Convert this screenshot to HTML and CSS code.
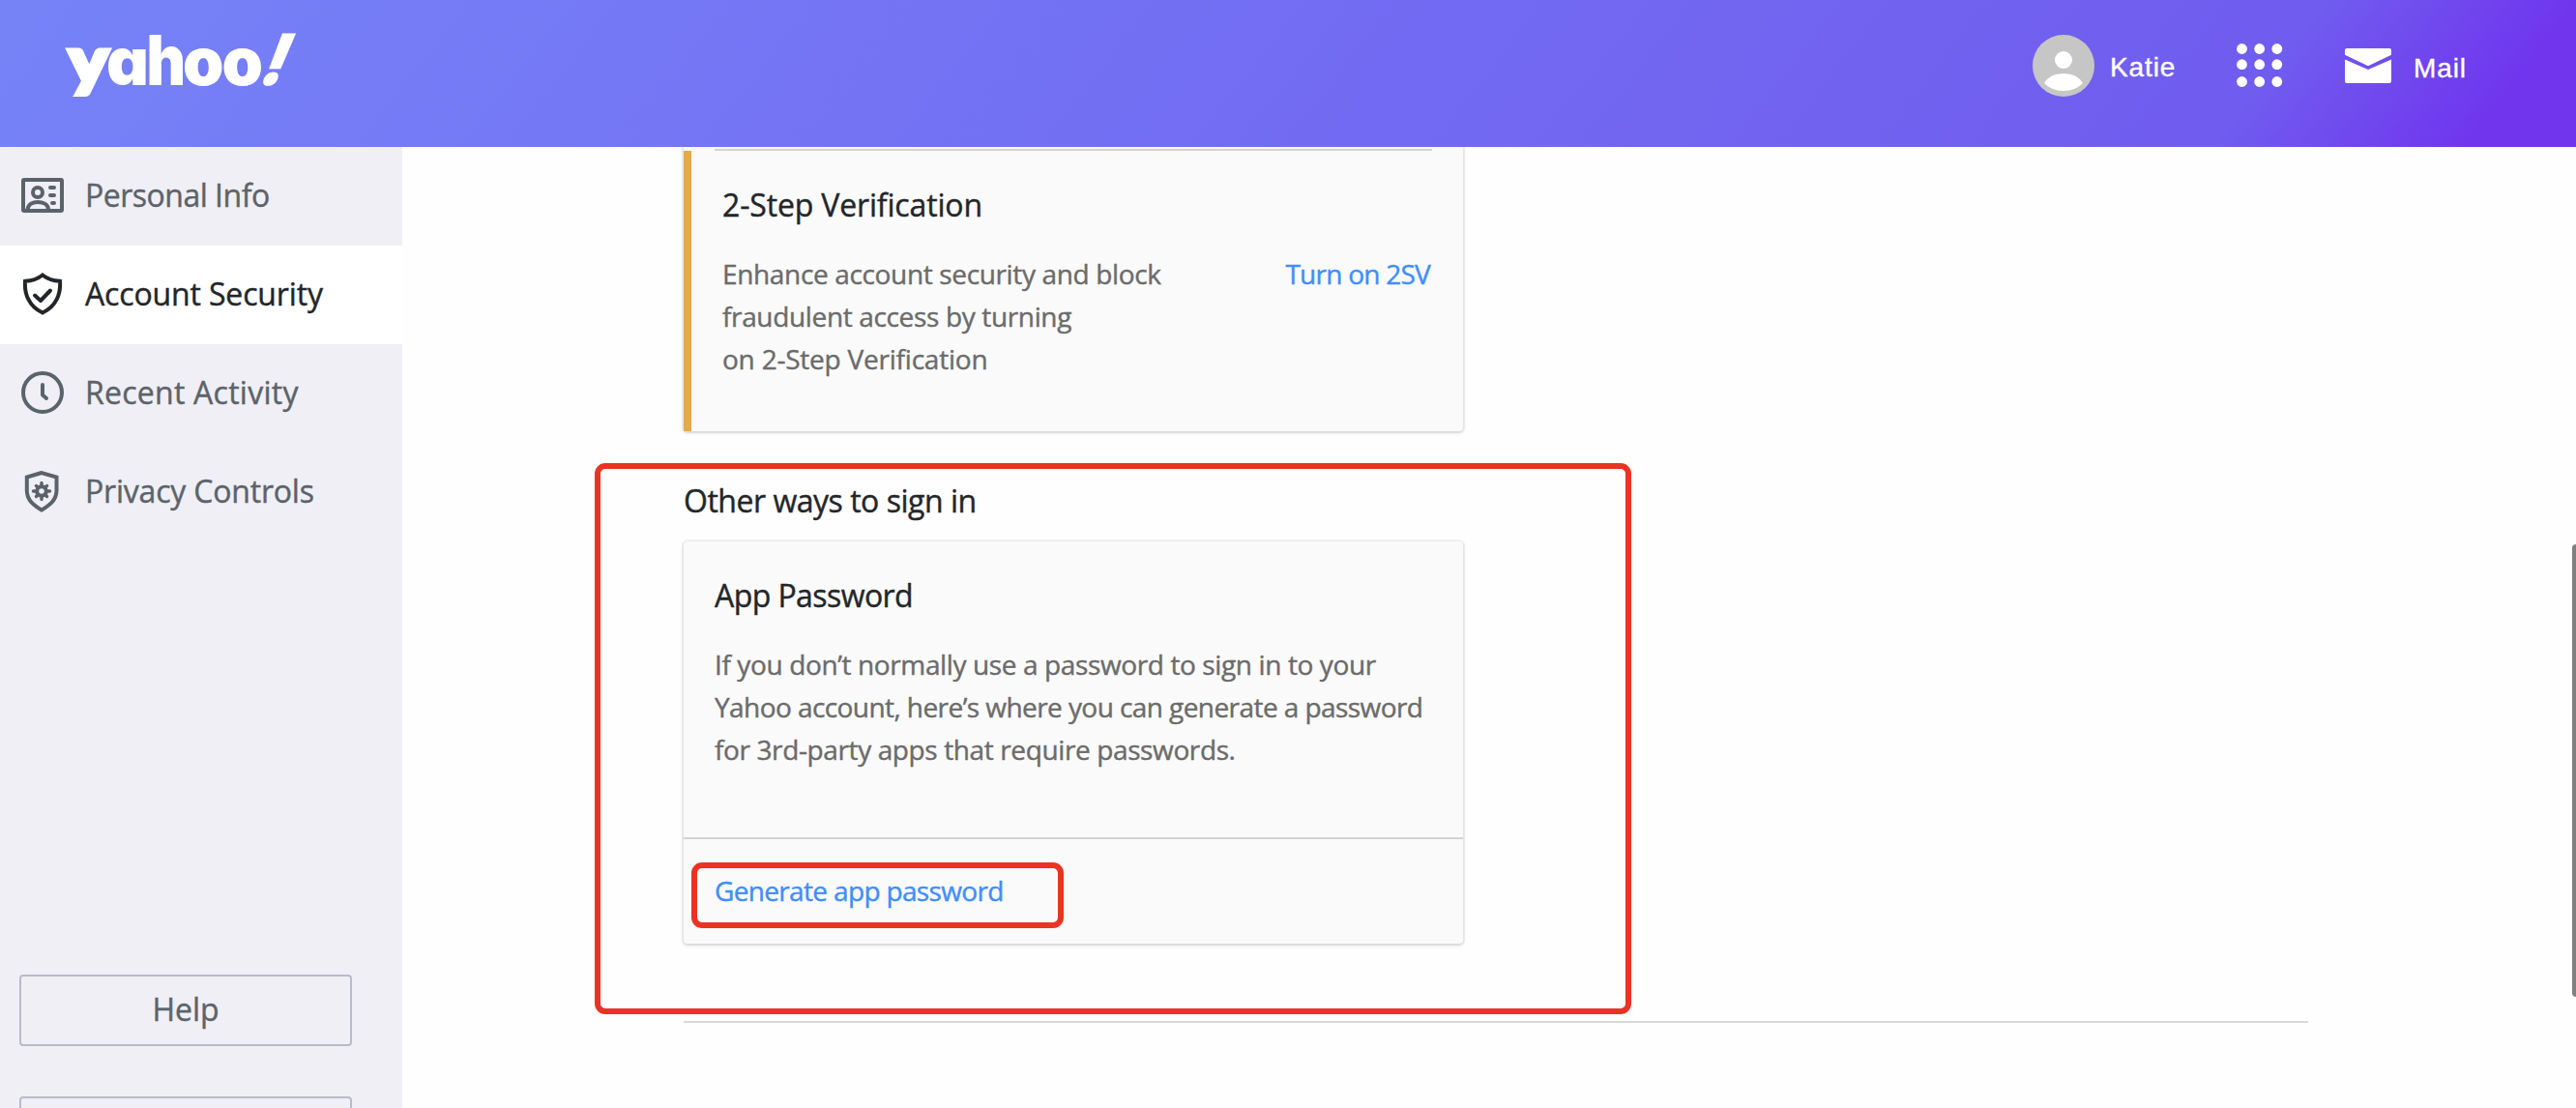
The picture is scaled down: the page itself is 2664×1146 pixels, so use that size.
FILE: index.html
```html
<!DOCTYPE html>
<html lang="en">
<head>
    <meta charset="UTF-8">
    <meta name="viewport" content="width=device-width, initial-scale=1.0">
    <title>Account Security</title>
    <link rel="stylesheet" href="styles.css">
</head>
<body>
    <header class="header">
        <svg class="logo" width="244" height="100" viewBox="66 18 244 100">
            <text class="logo-y" transform="translate(71.5 86) scale(1.14 1)">y</text>
            <text x="110" y="88">a</text>
            <text transform="translate(151.5 88) scale(.92 1.06)">h</text>
            <text x="189" y="88">o</text>
            <text x="229.5" y="88">o</text>
            <text transform="translate(264.5 88) skewX(-22) scale(1 1.08)">!</text>
        </svg>
        <div class="user">
            <svg class="avatar" width="64" height="64" viewBox="0 0 64 64">
                <circle cx="32" cy="32" r="32" fill="#c6c6c6"/>
                <circle cx="32" cy="26" r="9" fill="#fff"/>
                <path d="M12 50Q18 40 32 40T52 50Q44 58 32 58T12 50Z" fill="#fff"/>
            </svg>
            <span>Katie</span>
        </div>
        <svg class="apps" width="48" height="46" viewBox="0 0 48 46" fill="#fff">
            <circle cx="5.5" cy="5.5" r="5.4"/><circle cx="23.7" cy="5.5" r="5.4"/><circle cx="41.8" cy="5.5" r="5.4"/>
            <circle cx="5.5" cy="21.7" r="5.4"/><circle cx="23.7" cy="21.7" r="5.4"/><circle cx="41.8" cy="21.7" r="5.4"/>
            <circle cx="5.5" cy="39.5" r="5.4"/><circle cx="23.7" cy="39.5" r="5.4"/><circle cx="41.8" cy="39.5" r="5.4"/>
        </svg>
        <div class="mail">
            <svg width="48" height="36" viewBox="0 0 48 36" fill="#fff">
                <path d="M2 0H46Q48 0 48 2V6.8L24 18.3L0 6.8V2Q0 0 2 0Z"/>
                <path d="M0 11.5L24 22L48 11.5V34Q48 36 46 36H2Q0 36 0 34Z"/>
            </svg>
            <span>Mail</span>
        </div>
    </header>

    <div class="page">
        <aside class="sidebar">
            <nav>
                <a class="nav-item nav-info">
                    <svg width="44" height="44" viewBox="0 0 44 44">
                        <rect x="2" y="6" width="40" height="32" rx="1"/>
                        <circle cx="17" cy="19" r="5"/>
                        <path d="M6.500 37C7 31 12 29 17 29S28 31 28 37"/>
                        <path class="round" d="M30 14h4M30 22h4M32 30h2"/>
                    </svg>
                    <span>Personal Info</span>
                </a>
                <a class="nav-item nav-security active">
                    <svg width="44" height="44" viewBox="0 0 44 44">
                        <path d="M22 2.500C17 6.500 11 8.500 4 8.800C3 22 8 35 22 41.500C36 35 41 22 40 8.800C33 8.500 27 6.500 22 2.500Z"/>
                        <path class="round" d="M14 23.500L20 29L30 18.500"/>
                    </svg>
                    <span>Account Security</span>
                </a>
                <a class="nav-item nav-activity">
                    <svg width="44" height="44" viewBox="0 0 44 44">
                        <circle cx="22" cy="22" r="20"/>
                        <path class="round" d="M22 14V24.500L26 28"/>
                    </svg>
                    <span>Recent Activity</span>
                </a>
                <a class="nav-item nav-privacy">
                    <svg width="44" height="44" viewBox="0 0 44 44">
                        <path d="M21 3L5.800 7.500V21C5.800 31 12 36 21 41.500C30 36 36.500 31 36.500 21V7.500Z"/>
                        <circle cx="21" cy="22" r="4.800"/>
                        <path class="teeth" d="M21 13.500V17M21 27V30.500M12.500 22H16M26 22H29.500M15.500 16.500L17.500 18.500M24.500 25.500L26.500 27.500M26.500 16.500L24.500 18.500M17.500 25.500L15.500 27.500"/>
                    </svg>
                    <span>Privacy Controls</span>
                </a>
            </nav>
            <div class="sidebar-buttons">
                <a class="button">Help</a>
                <a class="button"></a>
            </div>
        </aside>

        <main class="content">
            <section class="card card-2sv">
                <div class="divider"></div>
                <div class="alert">
                    <h2>2-Step Verification</h2>
                    <div class="row">
                        <p>Enhance account security and block<br>fraudulent access by turning<br><span class="loose">on 2-Step Verification</span></p>
                        <a class="link link-2sv">Turn on 2SV</a>
                    </div>
                </div>
            </section>

            <h2 class="section-title">Other ways to sign in</h2>
            <section class="card">
                <div class="card-body">
                    <h2 class="tight">App Password</h2>
                    <p>If you don’t normally use a password to sign in to your<br><span class="tight">Yahoo account, here’s where you can generate a password</span><br>for 3rd-party apps that require passwords.</p>
                </div>
                <div class="card-footer">
                    <a class="link">Generate app password</a>
                    <div class="mark mark-link"></div>
                </div>
            </section>
            <hr>
            <div class="mark mark-section"></div>
        </main>
    </div>
    <div class="scroll-thumb"></div>
</body>
</html>
```

FILE: styles.css
```css
* {
    box-sizing: border-box;
}
body {
    margin: 0;
    height: 1146px;
    overflow: hidden;
    background: #fefefe;
    color: #232629;
    font-family: "Open Sans", "Noto Sans", sans-serif;
    font-size: 32px;
    line-height: 44px;
    -webkit-text-stroke: .4px;
}
h2, p {
    margin: 0;
    font-size: 32px;
    font-weight: 400;
}

/* header */
.header {
    display: flex;
    height: 152px;
    padding: 28px 110px 0 66px;
    background: linear-gradient(128deg, #7683f7 0%, #705cef 86.5%, #7035ed 96%);
    color: #fff;
    font: 28px/36px "Liberation Sans", Arial, sans-serif;
    letter-spacing: .9px;
}
.logo {
    margin-top: -10px;
    overflow: visible;
    fill: #fff;
    font: 900 68px Inter, sans-serif;
    font-feature-settings: "cv11";
    letter-spacing: 0;
    -webkit-text-stroke: 0;
}
.logo-y {
    font: 900 66px Lato, sans-serif;
    stroke: #fff;
    stroke-width: 5;
    stroke-linejoin: miter;
}
.user {
    display: flex;
    gap: 16px;
    width: 211px;
    margin-left: auto;
    padding-top: 8px;
}
.user span {
    padding-top: 16px;
}
.apps {
    margin-top: 17px;
}
.mail {
    display: flex;
    gap: 23px;
    width: 129px;
    margin-left: 64px;
    padding-top: 22px;
}
.mail span {
    padding-top: 3px;
}

/* sidebar */
.page {
    display: flex;
    height: 994px;
}
.sidebar {
    flex: none;
    width: 416px;
    background: #f0eff5;
    color: #5b636a;
}
.nav-item {
    display: flex;
    align-items: center;
    gap: 22px;
    height: 102px;
    padding-left: 22px;
}
.nav-item span {
    padding-bottom: 3px;
}
.nav-item svg {
    margin-bottom: 2px;
    fill: none;
    stroke: currentColor;
    stroke-width: 4;
}
.nav-item .round {
    stroke-linecap: round;
    stroke-linejoin: round;
}
.nav-item .teeth {
    stroke-width: 3.4;
    stroke-linecap: round;
}
.nav-info {
    letter-spacing: -.5px;
}
.nav-security {
    letter-spacing: -.15px;
}
.nav-activity {
    letter-spacing: .25px;
}
.nav-privacy {
    letter-spacing: -.2px;
}
.active {
    background: #fff;
    color: #232629;
}
.sidebar-buttons {
    display: flex;
    flex-direction: column;
    gap: 52px;
    height: 586px;
    padding: 448px 52px 0 20px;
    overflow: hidden;
}
.button {
    flex: none;
    height: 74px;
    border: 2px solid #b9bdc3;
    border-radius: 4px;
    line-height: 68px;
    text-align: center;
}

/* content */
.content {
    position: relative;
    flex: 1;
    padding-left: 291px;
}
.card {
    width: 806px;
    background: #fafafa;
    border-radius: 4px;
    box-shadow: 0 0 0 2px rgba(0,0,0,.05), 0 2px 4px rgba(0,0,0,.12);
}
.card-2sv {
    height: 294px;
    padding-top: 2px;
    border-radius: 0 0 4px 4px;
    clip-path: inset(0 -10px -10px -10px);
}
.divider {
    height: 2px;
    margin: 0 32px;
    background: #d3d3d3;
}
.alert {
    height: 290px;
    padding: 34px 32px 0;
    border-left: 8px solid #e8a947;
    letter-spacing: -.16px;
}
.row {
    display: flex;
    justify-content: space-between;
    margin-top: 27px;
}
p {
    color: #6b6b6b;
    font-size: 28px;
    letter-spacing: -.35px;
}
.loose {
    letter-spacing: -.22px;
}
.link {
    color: #3f8efc;
    font-size: 28px;
    letter-spacing: -.66px;
}
.link-2sv {
    margin-right: 2px;
    letter-spacing: -.75px;
}
.section-title {
    margin: 50px 0 20px;
    letter-spacing: -.48px;
}
.card-body {
    height: 308px;
    padding: 34px 32px 0;
    border-bottom: 2px solid #d3d3d3;
}
.card-body p {
    margin-top: 27px;
    letter-spacing: -.38px;
}
.card-body .tight {
    letter-spacing: -.57px;
}
.card-footer {
    position: relative;
    height: 108px;
    padding: 31px 32px 0;
}
.card-footer .link {
    display: block;
}
hr {
    width: 1680px;
    height: 2px;
    margin: 80px 0 0;
    border: 0;
    background: #d8d8d8;
}

/* red highlight boxes */
.mark {
    position: absolute;
    border: 6px solid #eb3323;
    border-radius: 11px;
}
.mark-link {
    left: 8px;
    top: 24px;
    width: 385px;
    height: 68px;
}
.mark-section {
    left: 199px;
    top: 327px;
    width: 1072px;
    height: 570px;
}
.scroll-thumb {
    position: absolute;
    right: 0;
    top: 563px;
    width: 4px;
    height: 468px;
    border-radius: 4px 0 0 4px;
    background: #7f7f7f;
}
```
